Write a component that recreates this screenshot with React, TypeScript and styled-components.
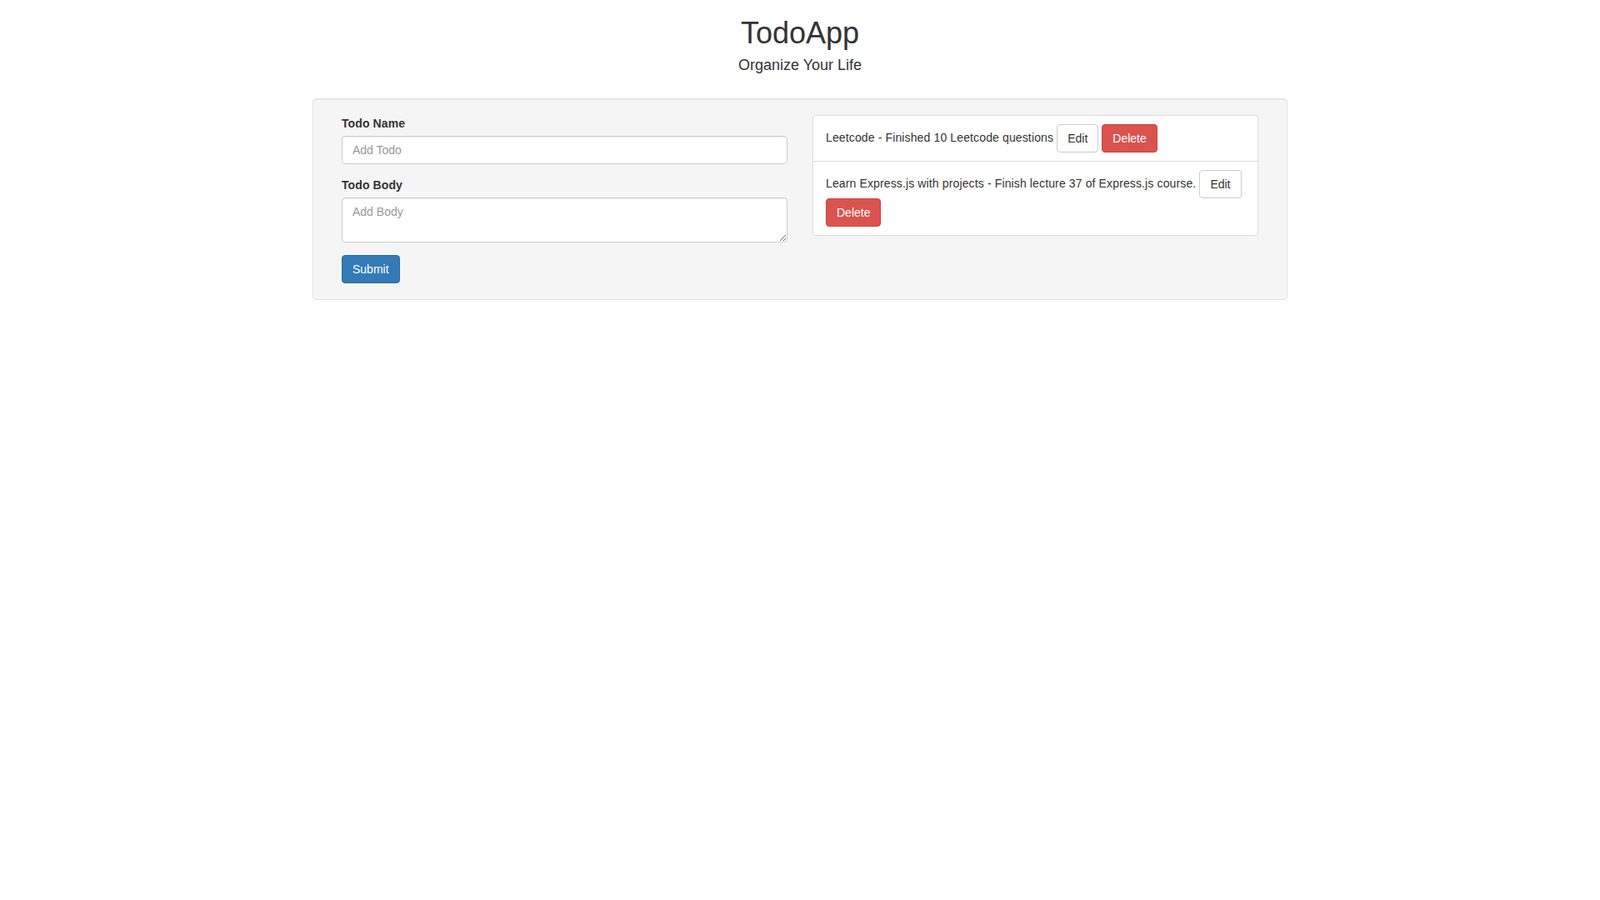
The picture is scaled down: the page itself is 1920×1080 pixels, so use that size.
import React from "react";
import styled, { createGlobalStyle, css } from "styled-components";

const GlobalStyle = createGlobalStyle`
  *, *::before, *::after { box-sizing: border-box; }
  html, body { margin: 0; padding: 0; background: #fff; }
  body {
    font-family: "Liberation Sans", Arial, Helvetica, sans-serif;
    font-size: 14px;
    line-height: 1.42857143;
    color: #333;
  }
`;

const Container = styled.div`
  width: 1170px;
  margin: 0 auto;
`;

const Header = styled.header`
  display: flex;
  flex-direction: column;
  align-items: center;
  padding: 20px 0 30px;
  text-align: center;
`;

const Title = styled.h1`
  margin: 0;
  font-size: 36px;
  font-weight: 500;
  line-height: 1.1;
  color: #333;
`;

const Subtitle = styled.h4`
  margin: 9px 0 0;
  font-size: 18px;
  font-weight: 500;
  line-height: 1.1;
  color: #333;
`;

const Well = styled.section`
  display: grid;
  grid-template-columns: 1fr 1fr;
  column-gap: 30px;
  align-items: start;
  padding: 19px 34px;
  background: #f5f5f5;
  border: 1px solid #e3e3e3;
  border-radius: 4px;
  box-shadow: inset 0 1px 1px rgba(0, 0, 0, 0.05);
`;

const Form = styled.form`
  margin: 0;
`;

const FormGroup = styled.div`
  margin-bottom: 15px;
`;

const Label = styled.label`
  display: block;
  margin-bottom: 5px;
  font-weight: 700;
  letter-spacing: 0.1px;
`;

const fieldStyles = css`
  display: block;
  width: 100%;
  padding: 6px 12px;
  font-family: inherit;
  font-size: 14px;
  line-height: 20px;
  color: #555;
  background: #fff;
  border: 1px solid #ccc;
  border-radius: 4px;
  box-shadow: inset 0 1px 1px rgba(0, 0, 0, 0.075);
  outline: none;
  &::placeholder { color: #999; opacity: 1; }
`;

const Input = styled.input`
  ${fieldStyles}
  height: 34px;
`;

const TextArea = styled.textarea`
  ${fieldStyles}
  height: 54px;
  resize: vertical;
  margin: 0;
`;

type Variant = "default" | "primary" | "danger";

const variants: Record<Variant, ReturnType<typeof css>> = {
  default: css`
    color: #333;
    background: #fff;
    border-color: #ccc;
  `,
  primary: css`
    color: #fff;
    background: #337ab7;
    border-color: #2e6da4;
  `,
  danger: css`
    color: #fff;
    background: #d9534f;
    border-color: #d43f3a;
  `,
};

const Button = styled.button<{ $variant: Variant }>`
  display: inline-block;
  margin: 0;
  padding: 6px 12px;
  font-family: inherit;
  font-size: 14px;
  font-weight: 400;
  line-height: 20px;
  letter-spacing: normal;
  text-align: center;
  white-space: nowrap;
  vertical-align: middle;
  cursor: pointer;
  border: 1px solid transparent;
  border-radius: 4px;
  ${(p) => variants[p.$variant]}
`;

const List = styled.ul`
  margin: 0;
  padding: 0;
  list-style: none;
`;

const ListItem = styled.li`
  display: block;
  padding: 10px 15px;
  margin-bottom: -1px;
  background: #fff;
  border: 1px solid #ddd;
  letter-spacing: 0.13px;
  &:first-child {
    border-top-left-radius: 4px;
    border-top-right-radius: 4px;
  }
  &:last-child {
    margin-bottom: 0;
    border-bottom-left-radius: 4px;
    border-bottom-right-radius: 4px;
  }
`;

const todos = [
  { name: "Leetcode", body: "Finished 10 Leetcode questions" },
  {
    name: "Learn Express.js with projects",
    body: "Finish lecture 37 of Express.js course.",
  },
];

export default function App() {
  return (
    <>
      <GlobalStyle />
      <Container>
        <Header>
          <Title>TodoApp</Title>
          <Subtitle>Organize Your Life</Subtitle>
        </Header>
        <Well>
          <Form onSubmit={(e) => e.preventDefault()}>
            <FormGroup>
              <Label htmlFor="todo-name">Todo Name</Label>
              <Input id="todo-name" type="text" placeholder="Add Todo" />
            </FormGroup>
            <FormGroup>
              <Label htmlFor="todo-body">Todo Body</Label>
              <TextArea id="todo-body" rows={2} placeholder="Add Body" />
            </FormGroup>
            <Button type="submit" $variant="primary">
              Submit
            </Button>
          </Form>
          <List>
            {todos.map((t) => (
              <ListItem key={t.name}>
                {t.name} - {t.body}{" "}
                <Button type="button" $variant="default">
                  Edit
                </Button>{" "}
                <Button type="button" $variant="danger">
                  Delete
                </Button>
              </ListItem>
            ))}
          </List>
        </Well>
      </Container>
    </>
  );
}
